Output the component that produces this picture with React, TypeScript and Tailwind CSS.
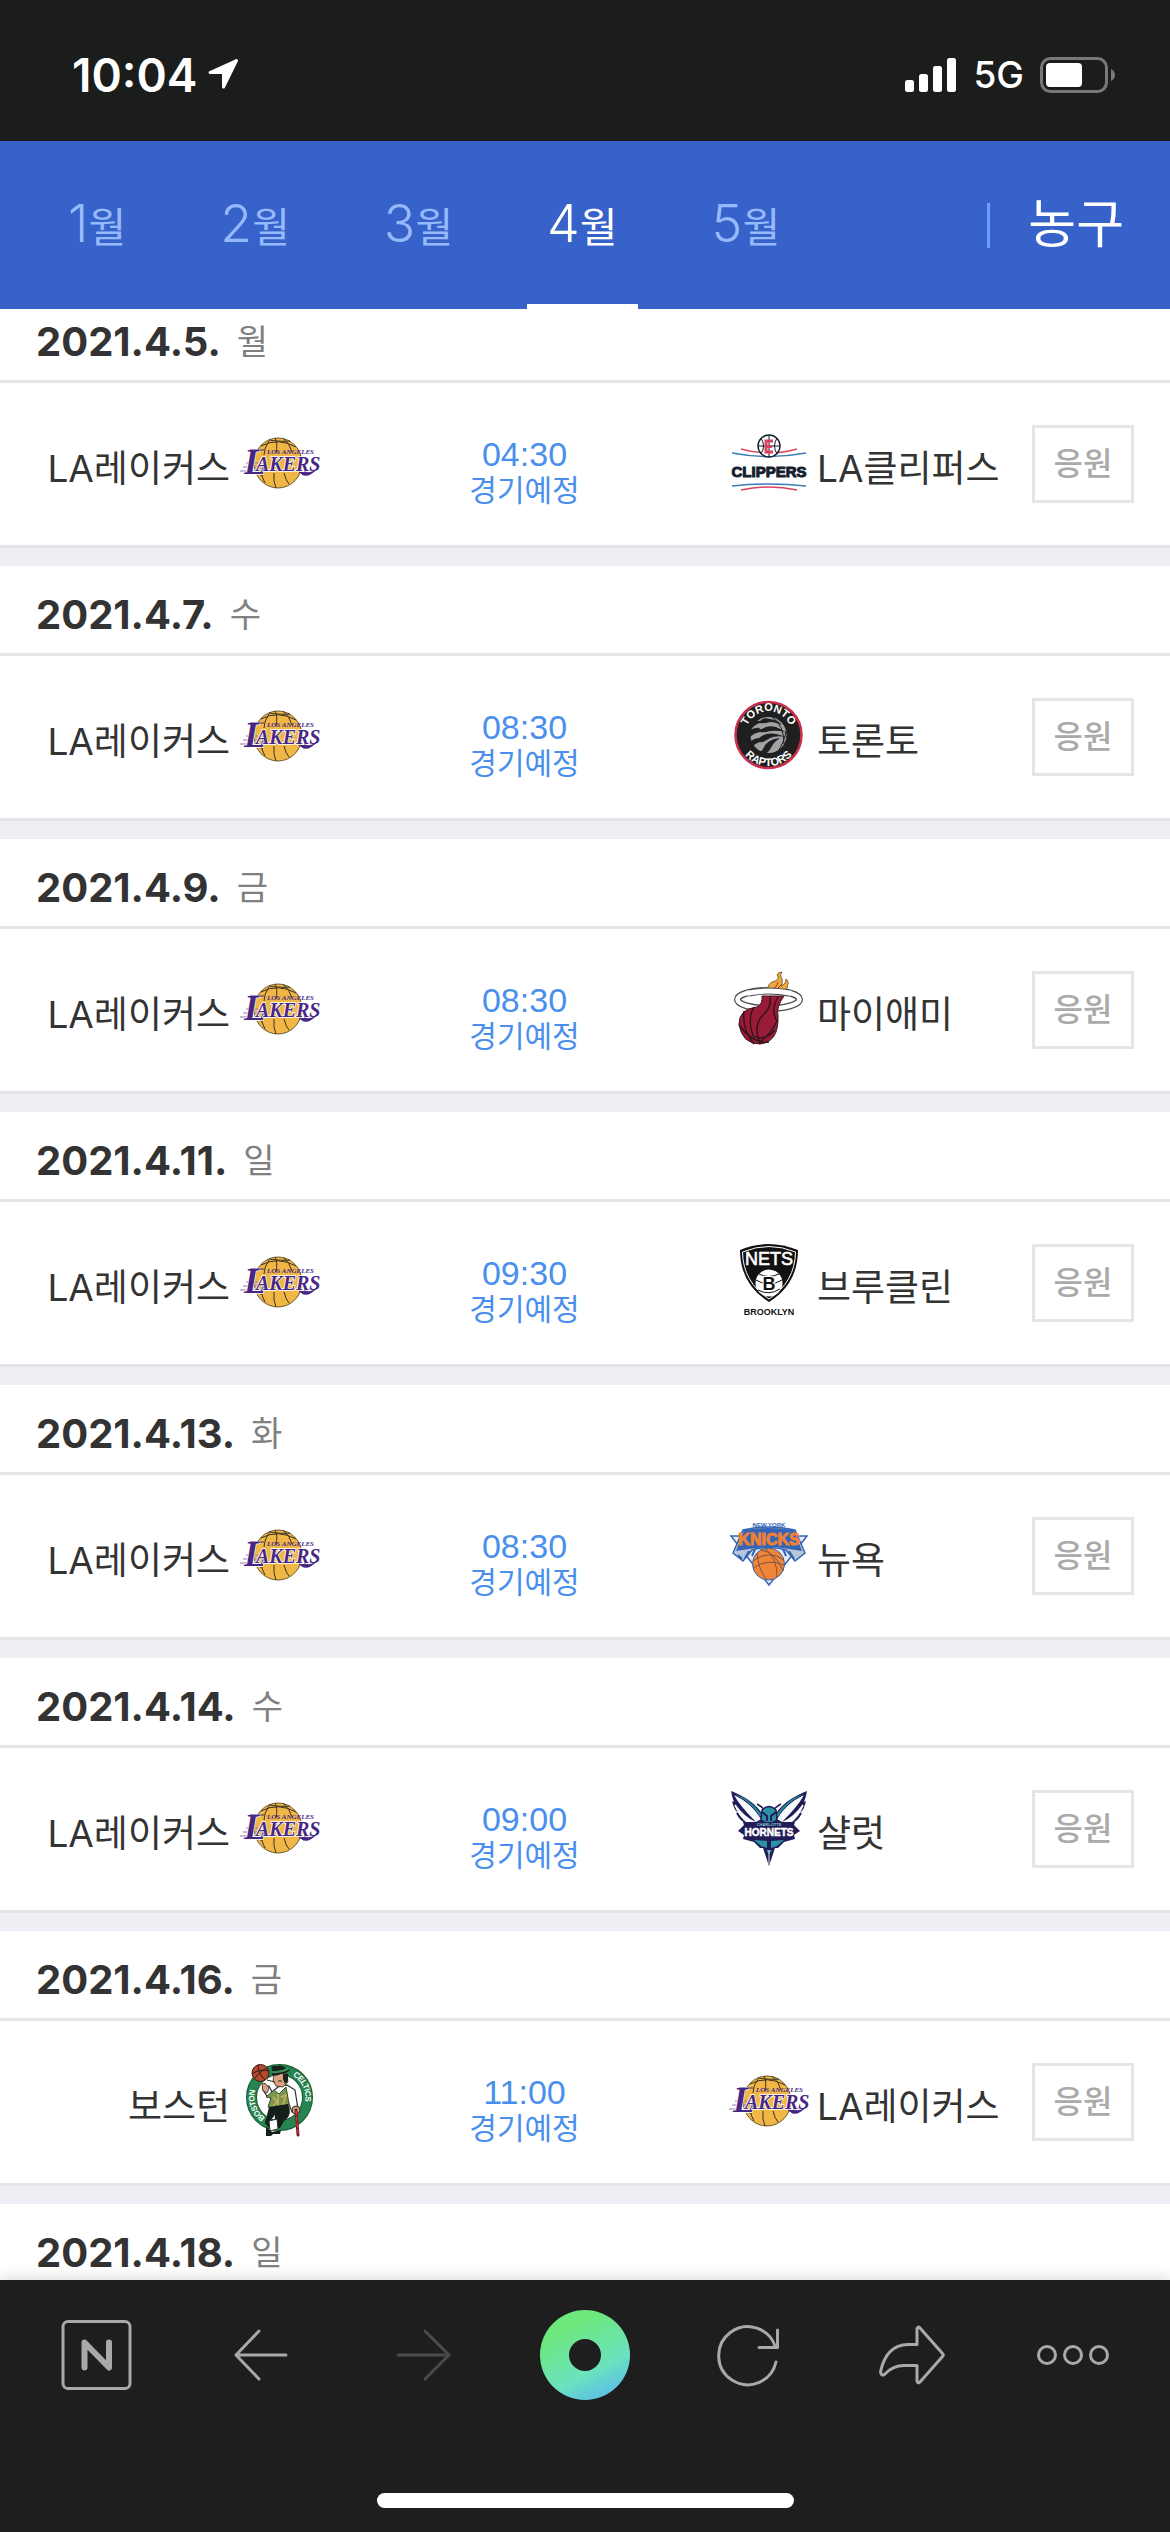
import type { ReactNode } from "react";

const sans = "'Liberation Sans', sans-serif";

function Logo({ label, children }: { label: string; children: ReactNode }) {
  return (
    <svg viewBox="0 0 80 80" role="img" aria-label={label} className="mb-0.5 size-20 shrink-0">
      {children}
    </svg>
  );
}

function Lakers() {
  return (
    <Logo label="Lakers">
      <ellipse cx="38" cy="40" rx="24" ry="25" fill="#f0b746" stroke="#6b5a2c" strokeWidth="1" />
      <g fill="none" stroke="#3b3020" strokeWidth="1">
        <path d="M21 23Q38 14 56 24M29 17Q42 19 50 18M35 15Q38 20 36 30M43 15Q50 21 52 29M29 18Q24 25 24 32M21 53Q20 48 22 45M25 60Q21 54 22 48M34 50Q33 58 36 65M44 50Q46 58 49 61" />
      </g>
      <path d="M3 44h14M0 48h18M6 40h12" stroke="#8d78b5" strokeWidth="1" />
      <g fontFamily="'Liberation Serif', serif" fontStyle="italic" fontWeight="700" fill="#472684">
        <text x="4" y="51" fontSize="36" stroke="#fff" strokeWidth="1.5" paintOrder="stroke">
          L<tspan fontSize="20" dx="-10" dy="-3">AKERS</tspan>
        </text>
        <text x="27" y="31" fontSize="7">LOS ANGELES</text>
      </g>
      <path d="M10 27h14M59 49Q68 58 79 43Q73 52 64 49" fill="#472684" stroke="#472684" strokeWidth="1" />
    </Logo>
  );
}

function Clippers() {
  return (
    <Logo label="Clippers">
      <path d="M12 26Q40 34 68 26" fill="none" stroke="#d94360" strokeWidth="1.5" />
      <path d="M3 30Q40 37 77 30" fill="none" stroke="#3b7cb8" strokeWidth="1.5" />
      <circle cx="40" cy="23" r="11" fill="#fff" stroke="#151d29" strokeWidth="1.4" />
      <path d="M29 23h22M40 12v22M32 15Q37 23 32 31M48 15Q43 23 48 31" fill="none" stroke="#151d29" />
      <path d="M44 18H37V29H44M37 23.500H43" fill="none" stroke="#d94360" strokeWidth="3" />
      <text x="40" y="54" textAnchor="middle" fontFamily={sans} fontWeight="700" fontSize="15" fill="#14202b" stroke="#14202b" strokeWidth="1">CLIPPERS</text>
      <path d="M3 63Q40 59 77 63" fill="none" stroke="#3b7cb8" strokeWidth="1.500" />
      <path d="M12 67Q40 61 68 67" fill="none" stroke="#d94360" strokeWidth="1.500" />
    </Logo>
  );
}

function Raptors() {
  return (
    <Logo label="Raptors">
      <defs>
        <path id="raptorsTop" d="M16 39A23.500 23.500 0 0 1 63 39" />
        <path id="raptorsBottom" d="M8.500 39A31 31 0 0 0 70.500 39" />
      </defs>
      <circle cx="39.500" cy="39" r="33" fill="#1f1f1f" stroke="#c9304c" strokeWidth="2.500" />
      <circle cx="39.500" cy="39" r="18" fill="#a0a2a5" />
      <g fill="#1f1f1f">
        <path d="M21 34Q27 31 31 32Q29 34 33 33Q38 29 47 31L57 36Q48 34 41 35Q35 37 31 36Q25 37 21 41Z" />
        <path d="M22 45Q26 42 30 42Q37 36 47 38L58 41Q47 39 41 42Q34 47 31 46Q27 47 24 50Z" />
        <path d="M30 56Q34 55 36 49Q41 43 51 42Q45 46 43 50Q41 55 36 58Z" />
        <path d="M23 28Q27 24 31 25Q34 21 41 23Q49 24 53 29Q46 26 41 26Q35 28 31 27Q27 28 22 33Z" />
      </g>
      <path d="M43 21Q55 29 55 48M48 57Q56 45 57 35" fill="none" stroke="#1f1f1f" strokeWidth="1" />
      <g fontFamily={sans} fontWeight="700" fontSize="11" fill="#fff" textAnchor="middle">
        <text><textPath href="#raptorsTop" startOffset="50%">TORONTO</textPath></text>
        <text><textPath href="#raptorsBottom" startOffset="50%">RAPTORS</textPath></text>
      </g>
    </Logo>
  );
}

function Heat() {
  return (
    <Logo label="Heat">
      <ellipse cx="39.500" cy="30.500" rx="31" ry="9" fill="none" stroke="#4b4b50" strokeWidth="7" />
      <ellipse cx="39.500" cy="30.500" rx="31" ry="9" fill="none" stroke="#fff" strokeWidth="4.600" />
      <path d="M39 21Q38 14 46 12Q51 10 48 6Q49 3 53 3Q50 6 53 10Q54 15 52 17Q57 15 57 10Q61 14 58 17Q60 18 55 22Z" fill="#eea83c" stroke="#64451f" strokeWidth=".8" />
      <path d="M42 20Q48 19 49 13M48 20L53 15" stroke="#9c3b1f" fill="none" />
      <path d="M33 27Q34 35 28 38Q10 40 10 55Q13 75 31 75Q50 73 49 47Q47 38 55 27Z" fill="#9a1b38" stroke="#391620" strokeWidth="1" />
      <path d="M15 42Q13 61 25 75M10 56Q24 75 40 73M25 38Q18 49 24 67Q35 73 46 61M41 27Q43 39 33 47Q24 58 31 75M49 28Q41 42 48 52Q41 66 31 73" fill="none" stroke="#32131b" strokeWidth="1.400" />
      <path d="M20 24Q39 20 60 24" fill="none" stroke="#4b4b50" strokeWidth="7" />
      <path d="M18 24.200Q39 20 62 24.200" fill="none" stroke="#fff" strokeWidth="5" />
    </Logo>
  );
}

function Nets() {
  return (
    <Logo label="Nets">
      <path d="M11 8Q39-4 69 8Q69 42 40 60Q11 42 11 8Z" fill="#111" />
      <path d="M13.500 10Q40-1 66.500 10Q66 40 40 57Q14 40 13.500 10Z" fill="none" stroke="#fff" strokeWidth="1" />
      <text x="40" y="23" textAnchor="middle" fontFamily={sans} fontWeight="400" fontSize="18" fill="#fff" stroke="#fff" strokeWidth=".6">NETS</text>
      <circle cx="40" cy="41" r="13.500" fill="#fff" />
      <path d="M27 38Q40 46 53 38M29 48Q40 54 51 47M30 32Q39 37 50 32" fill="none" stroke="#111" strokeWidth="1" />
      <text x="40" y="48" textAnchor="middle" fontFamily={sans} fontWeight="700" fontSize="18" fill="#111" stroke="#fff" strokeWidth="2" paintOrder="stroke">B</text>
      <text x="40" y="73" textAnchor="middle" fontFamily={sans} fontWeight="700" fontSize="9" fill="#111">BROOKLYN</text>
    </Logo>
  );
}

function Knicks() {
  return (
    <Logo label="Knicks">
      <path d="M2 21H78L40 70Z" fill="#e5e9f2" stroke="#3464b4" strokeWidth="1.500" />
      <path d="M4 38L14 15Q40 9 66 15L76 38L66 46L57 35Q40 30 23 35L14 46Z" fill="#b9c5d8" stroke="#3464b4" strokeWidth="1.500" />
      <path d="M7 36L15 15Q40 11 65 15L73 36L60 34Q40 30 20 34Z" fill="#3464b4" />
      <path d="M9 40l4 4M20 36l-4 7M26 34l-3 7M54 34l3 7M60 36l5 8" stroke="#3464b4" strokeWidth="2" />
      <text x="40" y="30" textAnchor="middle" fontFamily={sans} fontWeight="700" fontSize="16" fill="#ee8136" stroke="#ee8136" strokeWidth="1">KNICKS</text>
      <text x="40" y="12" textAnchor="middle" fontFamily={sans} fontWeight="700" fontSize="6" fill="#3464b4">NEW YORK</text>
      <circle cx="39.500" cy="49" r="16" fill="#f08538" stroke="#3464b4" strokeWidth="1" />
      <path d="M24 46Q40 34 55 45M28 38Q29 54 38 65M36 33Q49 45 48 62M24 53Q39 43 55 50M31 35Q46 36 54 56" fill="none" stroke="#7d5544" strokeWidth="1" />
    </Logo>
  );
}

function Hornets() {
  return (
    <Logo label="Hornets">
      <path d="M2 3Q25 12 34 27L40 21L46 27Q55 12 78 3Q77 9 75 14L77 13Q75 22 71 25L73 25Q69 34 61 36H19Q11 34 7 25L9 25Q5 22 3 13L5 14Q3 9 2 3Z" fill="#211c55" />
      <path d="M7 9Q22 16 31 31L27 33Q12 18 7 9ZM6 17Q15 30 27 35H20Q11 30 6 17ZM73 9Q58 16 49 31L53 33Q68 18 73 9ZM74 17Q65 30 53 35H60Q69 30 74 17Z" fill="#f7fafd" stroke="#f7fafd" strokeWidth="1.500" />
      <path d="M5 6Q24 15 31 29L33 27Q21 10 5 6ZM75 6Q56 15 49 29L47 27Q59 10 75 6Z" fill="#258b9e" />
      <path d="M28 16Q35 20 37 24M52 16Q45 20 43 24" fill="none" stroke="#211c55" strokeWidth="1.500" />
      <path d="M33 22Q40 15 47 22L48 32L40 37L32 32Z" fill="#2c91a4" stroke="#211c55" strokeWidth="1.500" />
      <path d="M33 24L38 28V33M47 24L42 28V33" fill="none" stroke="#211c55" strokeWidth="2" />
      <path d="M14 34H66L65 37L71 43L65 47L66 51L55 54L49 60H46L40 78L34 60H31L25 54L14 51L15 47L9 43L15 37Z" fill="#211c55" />
      <path d="M25 52L38 53V60L32 58ZM55 52L42 53V60L48 58ZM37 62H43L40 66Z" fill="#2c91a4" />
      <path d="M40 62V76" stroke="#dce5ee" />
      <text x="40" y="38" textAnchor="middle" fontFamily={sans} fontWeight="700" fontSize="4" fill="#83c5d1">CHARLOTTE</text>
      <text x="40" y="48" textAnchor="middle" fontFamily={sans} fontWeight="700" fontSize="10" fill="#fff" stroke="#fff" strokeWidth=".5">HORNETS</text>
    </Logo>
  );
}

function Celtics() {
  return (
    <Logo label="Celtics">
      <defs>
        <path id="celticsLeft" d="M26.500 61A28 28 0 0 1 27 11" />
        <path id="celticsRight" d="M46 9A28 28 0 0 1 57 59" />
      </defs>
      <circle cx="39.500" cy="36.500" r="28" fill="#fff" stroke="#1c5632" strokeWidth="11" />
      <circle cx="39.500" cy="36.500" r="28" fill="none" stroke="#268451" strokeWidth="9" />
      <g fontFamily={sans} fontWeight="700" fontSize="8" fill="#fff">
        <text dy="3"><textPath href="#celticsLeft" startOffset="4">BOSTON</textPath></text>
        <text dy="3"><textPath href="#celticsRight" startOffset="9">CELTICS</textPath></text>
      </g>
      <circle cx="20.500" cy="12" r="8.500" fill="#b4492d" stroke="#351c16" strokeWidth="1" />
      <path d="M12 13Q20 7 29 10M18 4Q18 12 25 19M14 18Q20 10 27 7" fill="none" stroke="#351c16" />
      <path d="M47 24L55 29L58 48L52 51L47 38L36 40L27 35L23 29L23 25L29 25L32 31L38 26Z" fill="#fff" stroke="#26302b" strokeWidth="1.200" />
      <path d="M22 23L25 22L29 27L27 32L23 30Z" fill="#d5a283" stroke="#332b25" strokeWidth=".8" />
      <path d="M34 13L47 12L48 21L43 26L36 25L33 20Z" fill="#d8a27f" stroke="#332b25" strokeWidth=".8" />
      <path d="M32 9Q30 4 37 5Q43 3 46 8L50 9Q46 13 41 13Q35 16 32 14Z" fill="#18221d" />
      <path d="M32 11Q40 12 48 8" fill="none" stroke="#3d9259" strokeWidth="2" />
      <path d="M43 13H48L48 20L45 23L43 18Z" fill="#18221d" />
      <path d="M27 19L35 21M38 20L42 20" stroke="#26302b" strokeWidth="1" />
      <path d="M34 29L39 33L46 26L49 43L41 48L28 46L31 37L26 36Z" fill="#799653" stroke="#384c27" strokeWidth="1" />
      <path d="M33 36L37 41L33 45M41 36L46 34L43 44M38 33V45" fill="none" stroke="#d2b35d" strokeWidth="1.500" />
      <path d="M29 46L48 43Q53 54 44 60L40 67H34L35 54L30 60L29 67L25 62Z" fill="#141e1b" />
      <path d="M29 60L37 58L38 68L30 70Z" fill="#fff" stroke="#26302b" />
      <path d="M26 66L32 71L41 69L40 73L33 73L31 75H26Z" fill="#141e1b" />
      <circle cx="56" cy="49" r="4" fill="#d5a283" stroke="#332b25" />
      <path d="M56 49L58 74" stroke="#7d1d28" strokeWidth="3" strokeLinecap="round" />
      <path d="M56 50L58 73" stroke="#da4350" strokeWidth="1" strokeDasharray="4 2" />
    </Logo>
  );
}

type Team = { name: string; logo: () => ReactNode };

const lakers: Team = { name: "LA레이커스", logo: Lakers };

type Game = { date: string; day: string; time: string; home: Team; away: Team };

const games: Game[] = [
  { date: "2021.4.5.", day: "월", time: "04:30", home: lakers, away: { name: "LA클리퍼스", logo: Clippers } },
  { date: "2021.4.7.", day: "수", time: "08:30", home: lakers, away: { name: "토론토", logo: Raptors } },
  { date: "2021.4.9.", day: "금", time: "08:30", home: lakers, away: { name: "마이애미", logo: Heat } },
  { date: "2021.4.11.", day: "일", time: "09:30", home: lakers, away: { name: "브루클린", logo: Nets } },
  { date: "2021.4.13.", day: "화", time: "08:30", home: lakers, away: { name: "뉴욕", logo: Knicks } },
  { date: "2021.4.14.", day: "수", time: "09:00", home: lakers, away: { name: "샬럿", logo: Hornets } },
  { date: "2021.4.16.", day: "금", time: "11:00", home: { name: "보스턴", logo: Celtics }, away: lakers },
];

function StatusBar() {
  return (
    <div className="flex h-[141px] shrink-0 items-center justify-between bg-[#1b1d1c] pt-2 pr-[54px] pl-[72px] text-white">
      <div className="flex items-center gap-2.5">
        <span className="text-[46px] leading-none font-semibold">10:04</span>
        <svg viewBox="0 0 32 32" className="mb-0.5 size-8" aria-hidden="true">
          <path d="M29.500 2.500L3 14.500H16.500V29Z" fill="currentColor" stroke="currentColor" strokeWidth="3" strokeLinejoin="round" />
        </svg>
      </div>
      <div className="flex items-center gap-4">
        <svg viewBox="0 0 52 36" className="h-9 w-[52px]" fill="currentColor" aria-hidden="true">
          <rect x="0" y="23" width="9" height="12" rx="2.500" />
          <rect x="14" y="17" width="9" height="18" rx="2.500" />
          <rect x="28" y="9" width="9" height="26" rx="2.500" />
          <rect x="42" y="1" width="9" height="34" rx="2.500" />
        </svg>
        <span className="text-[37px] leading-none font-medium">5G</span>
        <svg viewBox="0 0 76 36" className="h-9 w-[76px]" aria-hidden="true">
          <rect x="1.500" y="1.500" width="65" height="33" rx="9" fill="none" stroke="#777978" strokeWidth="3" />
          <rect x="6" y="6" width="36" height="24" rx="4" fill="#fff" />
          <path d="M71 12Q75 14 75 18T71 24Z" fill="#777978" />
        </svg>
      </div>
    </div>
  );
}

function MonthTabs() {
  return (
    <header className="flex h-[168px] shrink-0 items-stretch justify-between bg-[#3762c9] pr-[46px] pl-12">
      <nav className="flex gap-[54px]" aria-label="월">
        {[1, 2, 3, 4, 5].map((m) => (
          <a
            key={m}
            href={`#m${m}`}
            aria-current={m === 4 ? "page" : undefined}
            className={
              m === 4
                ? "flex items-center border-b-[5px] border-white px-5 pt-[3px] text-white"
                : "flex items-center border-b-[5px] border-transparent px-5 pt-[3px] text-[#96b9fb]"
            }
          >
            <span className="text-[52px] leading-none font-light">
              {m}
              <span className="text-[41px] font-normal">월</span>
            </span>
          </a>
        ))}
      </nav>
      <div className="flex items-center gap-[38px]">
        <span className="h-[45px] w-[3px] bg-[#6d9dfc]" />
        <a href="#sport" className="text-[52px] leading-none font-normal text-white">농구</a>
      </div>
    </header>
  );
}

function DayHeading({ date, day }: { date: string; day: string }) {
  return (
    <h2 className="flex h-[90px] items-center gap-4 border-b-[3px] border-[#e5e5e5] pt-2.5 pl-[36px]">
      <span className="text-[40px] leading-none font-bold text-[#333]">{date}</span>
      <span className="text-[34px] leading-none font-normal text-[#808080]">{day}</span>
    </h2>
  );
}

function GameRow({ game }: { game: Game }) {
  const HomeLogo = game.home.logo;
  const AwayLogo = game.away.logo;
  return (
    <div className="flex h-[165px] items-center border-b-[3px] border-[#e4e5e8]">
      <div className="flex w-80 items-center justify-end gap-2.5">
        <span className="mt-2 text-[37px] leading-none whitespace-nowrap text-[#333]">{game.home.name}</span>
        <HomeLogo />
      </div>
      <div className="flex flex-1 flex-col items-center pt-4 text-[#4b8fee]">
        <span className="font-['Liberation_Sans'] text-[34px] leading-9">{game.time}</span>
        <span className="text-[30px] leading-9">경기예정</span>
      </div>
      <div className="flex w-[441px] items-center gap-2 pr-9">
        <AwayLogo />
        <span className="mt-2 text-[37px] leading-none whitespace-nowrap text-[#333]">{game.away.name}</span>
        <button type="button" className="ml-auto h-[78px] w-[102px] shrink-0 border-[3px] border-[#e5e5e5] text-[32px] leading-none font-medium text-[#aaa]">
          응원
        </button>
      </div>
    </div>
  );
}

function ToolButton({ label, disabled, children }: { label: string; disabled?: boolean; children: ReactNode }) {
  return (
    <button
      type="button"
      aria-label={label}
      disabled={disabled}
      className="flex size-24 items-center justify-center text-[#a9a9ab] disabled:text-[#4a4a4a]"
    >
      <svg viewBox="0 0 96 96" className="size-24" fill="none" stroke="currentColor" strokeWidth="3" strokeLinecap="round" strokeLinejoin="round">
        {children}
      </svg>
    </button>
  );
}

function BrowserToolbar() {
  return (
    <footer className="relative h-[252px] shrink-0 bg-[#1e1e1e] shadow-[0_-2px_14px_rgba(0,0,0,0.15)]">
      <div className="flex h-[150px] items-center justify-between px-12">
        <ToolButton label="네이버 홈">
          <rect x="15" y="14.500" width="67" height="67" rx="5" />
          <path d="M36.500 60.500V35.500L61 60.500V35.500" strokeWidth="6" />
        </ToolButton>
        <ToolButton label="뒤로">
          <path d="M75 48H25M48 24L25 48L48 72" />
        </ToolButton>
        <ToolButton label="앞으로" disabled>
          <path d="M24 48H75M51 24L75 48L51 72" />
        </ToolButton>
        <ToolButton label="그린닷">
          <defs>
            <linearGradient id="greenDot" x1="0.300" y1="0" x2="0.800" y2="1">
              <stop offset="0.150" stopColor="#6ee77c" />
              <stop offset="0.650" stopColor="#6be3bd" />
              <stop offset="1" stopColor="#5ab9ee" />
            </linearGradient>
          </defs>
          <path d="M48 3A45 45 0 1 0 48 93A45 45 0 1 0 48 3ZM48 32A16 16 0 1 1 48 64A16 16 0 1 1 48 32Z" fill="url(#greenDot)" fillRule="evenodd" stroke="none" />
        </ToolButton>
        <ToolButton label="새로고침">
          <path d="M76 55A29 29 0 1 1 75.500 40.500M77.500 23V40.500H59" />
        </ToolButton>
        <ToolButton label="공유">
          <path d="M54 37.500V21.500Q55 19 57 21L79.500 46.500Q81 48 79.500 49.500L57 75Q55 77 54 74.500V58.500H41Q30 58.500 22 67Q18.500 70 17.500 65Q23 38 45 37.500Z" />
        </ToolButton>
        <ToolButton label="더보기">
          <circle cx="21" cy="48" r="8.500" />
          <circle cx="47" cy="48" r="8.500" />
          <circle cx="73" cy="48" r="8.500" />
        </ToolButton>
      </div>
      <div className="mx-auto mt-[63px] h-[15px] w-[417px] rounded-full bg-white" />
    </footer>
  );
}

export default function App() {
  return (
    <div className="flex h-screen flex-col overflow-hidden bg-white font-['Inter','Noto_Sans_CJK_KR',sans-serif]">
      <StatusBar />
      <MonthTabs />
      <main className="min-h-0 flex-1 overflow-hidden">
        <div className="-mt-4">
          {games.map((game) => (
            <section key={game.date} className="border-b-[18px] border-[#eeeff5]">
              <DayHeading date={game.date} day={game.day} />
              <GameRow game={game} />
            </section>
          ))}
          <section>
            <DayHeading date="2021.4.18." day="일" />
          </section>
        </div>
      </main>
      <BrowserToolbar />
    </div>
  );
}
